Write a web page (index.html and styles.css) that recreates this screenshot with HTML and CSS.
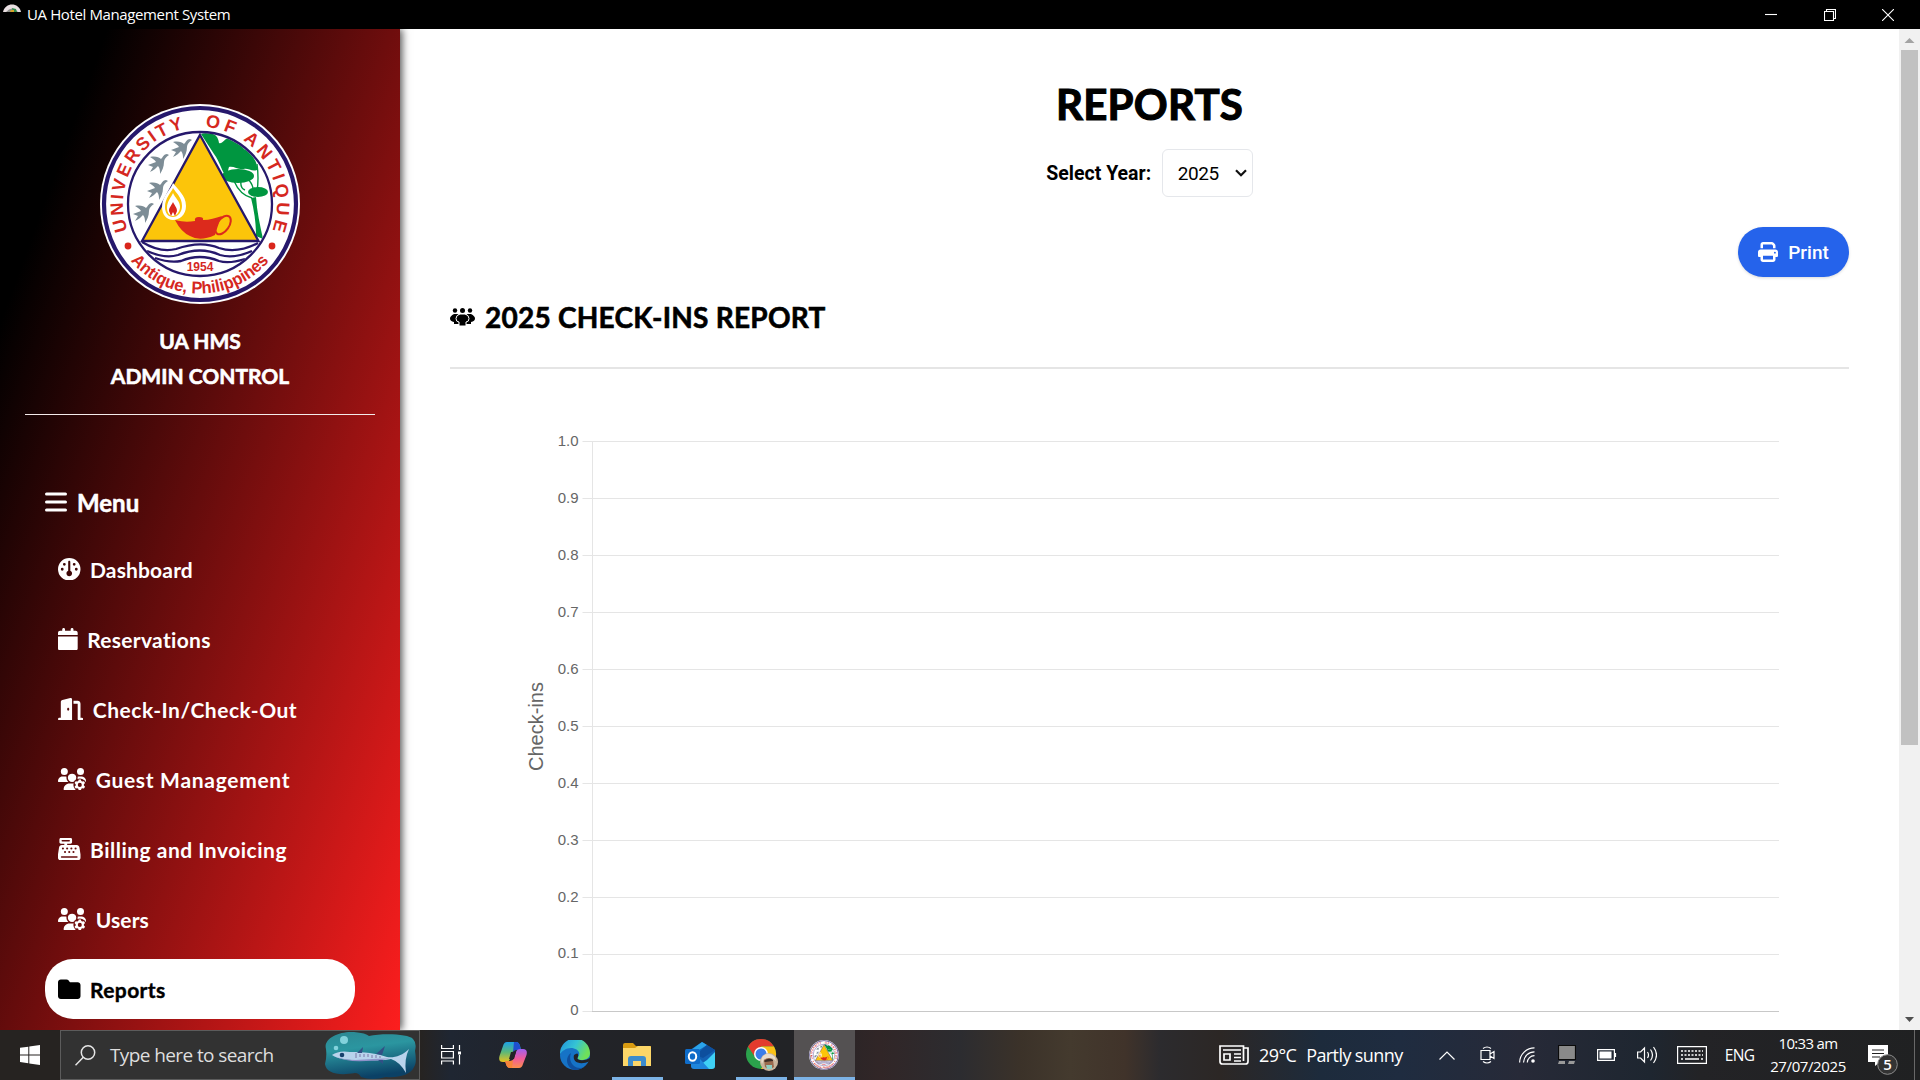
FILE: index.html
```html
<!DOCTYPE html>
<html lang="en">
<head>
<meta charset="utf-8">
<title>UA Hotel Management System</title>
<link rel="stylesheet" href="styles.css">
</head>
<body>
<svg class="defs" aria-hidden="true">
  <symbol id="i-users-gear" viewBox="0 0 640 512">
    <mask id="gear-gap"><rect width="640" height="512" fill="#fff"/><circle cx="496" cy="384" r="146" fill="#000"/></mask>
    <g mask="url(#gear-gap)"><path d="M144 160A80 80 0 1 0 144 0a80 80 0 1 0 0 160zm368 0A80 80 0 1 0 512 0a80 80 0 1 0 0 160zM0 298.7C0 310.4 9.6 320 21.3 320H235.300c-26.600-23.500-43.300-57.800-43.300-96c0-7.600.7-15 1.900-22.300c-13.600-6.300-28.700-9.700-44.600-9.700H106.700C47.800 192 0 239.800 0 298.700zM618.700 320c11.800 0 21.300-9.600 21.300-21.300C640 239.800 592.200 192 533.300 192h-42.700c-15.900 0-31 3.500-44.600 9.700c1.300 7.200 1.900 14.700 1.900 22.300c0 38.200-16.800 72.500-43.300 96zM320 320a96 96 0 1 0 0-192a96 96 0 1 0 0 192zM261.300 352C187.700 352 128 411.700 128 485.300c0 14.700 11.900 26.700 26.700 26.700H485.300L500 352z"/></g>
    <path fill-rule="evenodd" d="M470 260h52l8 36 24 14 36-11 26 45-27 25v30l27 25-26 45-36-11-24 14-8 40h-52l-8-40-24-14-36 11-26-45 27-25v-30l-27-25 26-45 36 11 24-14zM496 338a46 46 0 1 0 0 92a46 46 0 1 0 0-92z"/>
  </symbol>
  <symbol id="seal" viewBox="0 0 200 200">
    <defs>
      <path id="arc-top" d="M27.640 126.330A77 77 0 1 1 172.360 126.330"/>
      <path id="arc-bottom" d="M15.900 130.600A89.500 89.500 0 0 0 184.100 130.600"/>
      <clipPath id="seal-core"><circle cx="100" cy="100" r="71"/></clipPath>
    </defs>
    <circle cx="100" cy="100" r="100" fill="#fff"/>
    <circle cx="100" cy="100" r="96" fill="none" stroke="#26186c" stroke-width="4.200"/>
    <g clip-path="url(#seal-core)">
      <g fill="#009640">
        <path d="M101 30c10-3 17 0 18 9c3 1 4-2 7-4c8-2 14 4 18 10c8 5 14 13 13 21c-5 2-9-2-13-1c-6 1-10-3-15-2c-2 6 0 8-3 9c-4-4-6-14-12-22z"/>
        <ellipse cx="138" cy="72" rx="16" ry="7"/><ellipse cx="158" cy="88" rx="10" ry="5"/>
        <path d="M151 94l5-1c1 15 4 28 7 42l-7-3c0-14-2-26-5-38z"/>
      </g>
      <g fill="none" stroke="#009640" stroke-width="1.400"><path d="M157 60q2 14 0 28M134 77q6 14 18 17M141 77q-1 7 4 9M147 74q5 5 6 10"/></g>
      <g fill="#7d8d96">
        <path id="bird" d="M71 46l8-3c-1-2-4-4-6-5c5-1 9 0 11 2c2-2 3-5 6-5l2 1c-3 2-5 4-5 7c0 5-2 9-4 12c0-3 0-6-2-8c-3 3-4 4-8 6l3-5z"/>
        <use href="#bird" x="-23" y="15"/><use href="#bird" x="-24" y="41"/><use href="#bird" x="-38" y="64"/>
      </g>
      <path d="M30 138h140v62H30z" fill="#fff"/>
      <g fill="none" stroke="#26186c" stroke-width="2.300"><path d="M42 138q18 11 34 7c14-5 29-7 43-1q18 6 39-5M47 147q18 8 31 4c15-6 29-6 42 0q14 4 32-4M55 154q14 5 26 3c14-6 26-5 38 0q10 3 26-2"/></g>
    </g>
    <circle cx="100" cy="100" r="72" fill="none" stroke="#26186c" stroke-width="2.300"/>
    <path d="M100 31L158.500 137H42z" fill="#fcc50a" stroke="#26186c" stroke-width="2.300"/>
    <path d="M73 79c-2 7-11 12-11 24c0 8 5 13 11 13s13-5 13-14c0-11-9-17-13-23z" fill="#fff"/>
    <path d="M73 84c-2 5-8 10-8 19c0 6 3 10 8 10s9-5 9-11c0-9-6-13-9-18z" fill="#fcc50a"/>
    <path d="M73 89c-2 5-6 8-6 15c0 5 3 8 6 8s7-4 7-9c0-6-5-9-7-14z" fill="#fff"/>
    <path d="M73 98c-1 3-4 5-4 9l2 5 2-4 2 4 2-5c0-4-3-6-4-9z" fill="#d9261c"/>
    <path d="M75 116c8 2 13 2 20 1q-1-4 4-4q5 0 4 3c7 0 12-2 19-4c-3 6-5 12-7 19q-15 7-25 1q-9-4-15-16z" fill="#dc2a1c"/>
    <ellipse cx="123" cy="121" rx="6" ry="10.500" transform="rotate(35 123 121)" fill="none" stroke="#dc2a1c" stroke-width="2"/>
    <circle cx="28" cy="142" r="3.400" fill="#d9261c"/><circle cx="172" cy="142" r="3.400" fill="#d9261c"/>
    <g class="seal-text">
      <text textLength="131"><textPath href="#arc-top" startOffset="0">UNIVERSITY</textPath></text>
      <text textLength="29"><textPath href="#arc-top" startOffset="153">OF</textPath></text>
      <text textLength="102"><textPath href="#arc-top" startOffset="193">ANTIQUE</textPath></text>
      <text class="seal-place" textLength="158" lengthAdjust="spacingAndGlyphs"><textPath href="#arc-bottom" startOffset="30">Antique, Philippines</textPath></text>
      <text class="seal-year" x="100" y="167" text-anchor="middle">1954</text>
    </g>
  </symbol>
</svg>

<header class="titlebar">
  <svg class="app-icon" viewBox="0 0 18 8"><path d="M0 8C2-2 16-2 18 8z" fill="#e9dfe2"/><path d="M3 8q6-7 12 0z" fill="#8f8f8a"/><path d="M9 4l4 1 1 3h-4z" fill="#2e8b4a"/><path d="M8 6h3v2H7z" fill="#d7a32a"/></svg>
  <span class="window-title">UA Hotel Management System</span>
  <div class="window-buttons">
    <svg viewBox="0 0 12 12"><path d="M0 5.500h12"/></svg>
    <svg viewBox="0 0 12 12"><path d="M.5 2.500h9v9h-9zM2.500 2.500v-2h9v9h-2"/></svg>
    <svg viewBox="0 0 12 12"><path d="M0 0l12 12M12 0L0 12"/></svg>
  </div>
</header>

<div class="workspace">
  <aside class="sidebar">
    <svg class="logo"><use href="#seal"/></svg>
    <h2 class="brand">UA HMS<br>ADMIN CONTROL</h2>
    <hr class="brand-rule">
    <nav class="menu">
      <h3 class="menu-title"><svg viewBox="0 0 22 20" width="22" height="20"><path d="M1.500 2h19M1.500 10h19M1.500 18h19" stroke="#fff" stroke-width="3" stroke-linecap="round"/></svg>Menu</h3>
      <a class="item dashboard"><svg viewBox="0 0 512 512"><path d="M0 256a256 256 0 1 1 512 0A256 256 0 1 1 0 256zm320 96c0-26.900-16.500-49.900-40-59.300V88c0-13.300-10.700-24-24-24s-24 10.700-24 24V292.700c-23.500 9.500-40 32.500-40 59.300c0 35.300 28.700 64 64 64s64-28.700 64-64zM144 176a32 32 0 1 0 0-64 32 32 0 1 0 0 64zm-16 80a32 32 0 1 0 -64 0 32 32 0 1 0 64 0zm288 32a32 32 0 1 0 0-64 32 32 0 1 0 0 64zM400 144a32 32 0 1 0 -64 0 32 32 0 1 0 64 0z"/></svg>Dashboard</a>
      <a class="item reservations"><svg viewBox="0 0 448 512"><path d="M96 32V64H48C21.500 64 0 85.500 0 112v48H448V112c0-26.500-21.500-48-48-48H352V32c0-17.700-14.300-32-32-32s-32 14.300-32 32V64H160V32c0-17.700-14.300-32-32-32S96 14.300 96 32zM448 192H0V464c0 26.500 21.500 48 48 48H400c26.500 0 48-21.500 48-48V192z"/></svg>Reservations</a>
      <a class="item checkin"><svg viewBox="0 0 576 512"><path d="M320 32c0-9.900-4.500-19.200-12.300-25.200S289.800-1.400 280.200 1l-179.900 45C79 51.300 64 70.500 64 92.500V448H32c-17.700 0-32 14.300-32 32s14.300 32 32 32H320V32zM256 256c0 17.700-10.700 32-24 32s-24-14.300-24-32s10.700-32 24-32s24 14.300 24 32zm96-128h96V480c0 17.700 14.300 32 32 32h64c17.700 0 32-14.300 32-32s-14.300-32-32-32H512V128c0-35.300-28.700-64-64-64H352v64z"/></svg>Check-In/Check-Out</a>
      <a class="item guests"><svg viewBox="0 0 640 512"><use href="#i-users-gear"/></svg>Guest Management</a>
      <a class="item billing"><svg viewBox="0 0 512 512"><path d="M64 0C46.300 0 32 14.300 32 32V96c0 17.700 14.300 32 32 32h80v32H87c-31.600 0-58.500 23.100-63.300 54.400L1.100 364.100C.4 368.800 0 373.600 0 378.400V448c0 35.300 28.700 64 64 64H448c35.300 0 64-28.700 64-64V378.400c0-4.800-.4-9.600-1.100-14.400L488.200 214.400C483.500 183.100 456.600 160 425 160H208V128h80c17.700 0 32-14.300 32-32V32c0-17.700-14.300-32-32-32H64zM96 48H256c8.800 0 16 7.200 16 16s-7.200 16-16 16H96c-8.800 0-16-7.200-16-16s7.200-16 16-16zM64 432c0-8.800 7.200-16 16-16H432c8.800 0 16 7.200 16 16s-7.200 16-16 16H80c-8.800 0-16-7.200-16-16zm48-168a24 24 0 1 1 0-48 24 24 0 1 1 0 48zm120-24a24 24 0 1 1 -48 0 24 24 0 1 1 48 0zM160 344a24 24 0 1 1 0-48 24 24 0 1 1 0 48zM328 240a24 24 0 1 1 -48 0 24 24 0 1 1 48 0zM256 344a24 24 0 1 1 0-48 24 24 0 1 1 0 48zM424 240a24 24 0 1 1 -48 0 24 24 0 1 1 48 0zM352 344a24 24 0 1 1 0-48 24 24 0 1 1 0 48z"/></svg>Billing and Invoicing</a>
      <a class="item users"><svg viewBox="0 0 640 512"><use href="#i-users-gear"/></svg>Users</a>
      <a class="item reports active"><svg viewBox="0 0 512 512"><path d="M64 480H448c35.300 0 64-28.700 64-64V160c0-35.300-28.700-64-64-64H288c-10.100 0-19.600-4.700-25.600-12.800L243.200 57.600C231.100 41.500 212.100 32 192 32H64C28.700 32 0 60.700 0 96V416c0 35.300 28.700 64 64 64z"/></svg>Reports</a>
    </nav>
  </aside>

  <main class="content">
    <h1 class="page-title">REPORTS</h1>
    <div class="year-picker">
      <label class="year-label">Select Year:</label>
      <div class="year-select"><span>2025</span><svg viewBox="0 0 12 8" width="12" height="8"><path d="M1 1.200l5 5 5-5" fill="none" stroke="#111" stroke-width="2.200"/></svg></div>
    </div>
    <div class="actions">
      <button class="print"><svg viewBox="0 0 512 512" width="20" height="20"><path fill="#fff" d="M128 0C92.700 0 64 28.700 64 64v96h64V64H354.700L384 93.300V160h64V93.300c0-17-6.700-33.300-18.700-45.300L400 18.700C388 6.700 371.700 0 354.700 0H128zM384 352v32 64H128V384 368 352H384zm64 32h32c17.700 0 32-14.300 32-32V256c0-35.300-28.700-64-64-64H64c-35.300 0-64 28.700-64 64v96c0 17.700 14.300 32 32 32H64v64c0 35.300 28.700 64 64 64H384c35.300 0 64-28.700 64-64V384zM432 248a24 24 0 1 1 0 48 24 24 0 1 1 0-48z"/></svg>Print</button>
    </div>
    <h2 class="report-title">
      <svg viewBox="0 0 25 18" width="25" height="18"><circle cx="5" cy="2.500" r="2.200"/><circle cx="20" cy="2.500" r="2.200"/><path d="M4 6h4l1 10H4v-2Q0 13 0 10.500T4 6zM21 6h-4l-1 10h5v-2q4-1 4-3.500T21 6z"/><path d="M10 6h5q4 1 4 4.500T16 14v4H9v-4Q6 14 6 10.500T10 6z" stroke="#fff" stroke-width="1"/><circle cx="12.500" cy="2.500" r="2.500"/></svg>
      2025 CHECK-INS REPORT
    </h2>
    <svg class="chart" viewBox="0 0 1400 660">
      <g class="grid">
        <path d="M132.500 71.500h1196.500M132.500 128.500h1196.500M132.500 185.500h1196.500M132.500 242.500h1196.500M132.500 299.500h1196.500M132.500 356.500h1196.500M132.500 413.500h1196.500M132.500 470.500h1196.500M132.500 527.500h1196.500M132.500 584.500h1196.500M132.500 641.500h10M142.500 71v571"/>
        <path class="baseline" d="M142 641.500h1187"/>
      </g>
      <g class="ticks">
        <text x="128.500" y="76">1.0</text><text x="128.500" y="133">0.9</text><text x="128.500" y="190">0.8</text><text x="128.500" y="247">0.7</text><text x="128.500" y="304">0.6</text><text x="128.500" y="361">0.5</text><text x="128.500" y="418">0.4</text><text x="128.500" y="475">0.3</text><text x="128.500" y="532">0.2</text><text x="128.500" y="588">0.1</text><text x="128.500" y="645">0</text>
      </g>
      <text class="axis-title" transform="translate(93 356.500) rotate(-90)">Check-ins</text>
    </svg>
  </main>

  <div class="scrollbar">
    <svg viewBox="0 0 21 21"><path d="M5.500 14l5-5 5 5z" fill="#a3a3a3"/></svg>
    <div class="thumb"></div>
    <svg viewBox="0 0 21 21"><path d="M6 8l4.500 5L15 8z" fill="#505050"/></svg>
  </div>
</div>

<footer class="taskbar">
  <div class="start"><svg viewBox="0 0 20 20" width="20" height="20"><path fill="#fff" d="M0 2.800l8.300-1.100v7.700H0zM9.300 1.500L20 0v9.400H9.300zM0 10.400h8.300v7.800L0 17zM9.300 10.400H20V20L9.300 18.500z"/></svg></div>
  <div class="search">
    <svg class="lens" viewBox="0 0 21 21" width="21" height="21" fill="none" stroke="#e6e6e6" stroke-width="1.500"><circle cx="13" cy="7.500" r="6.700"/><path d="M8.300 12.300L.5 20.300"/></svg>
    <span class="search-text">Type here to search</span>
    <svg class="fish" viewBox="0 0 92 48" width="92" height="48">
      <defs><linearGradient id="sea" x1="0" y1="0" x2=".25" y2="1"><stop offset="0" stop-color="#2c8792"/><stop offset=".4" stop-color="#2b96a0"/><stop offset="1" stop-color="#0b4166"/></linearGradient></defs>
      <path d="M2 18C-1 8 14 0 30 1q12 1 15 4c14-3 40-2 44 3q4 4 2 12q2 12-1 16c-3 8-16 11-28 10q-14 4-25 0q-2-4-6-4C14 45 2 42 1 33q2-7 1-15z" fill="url(#sea)"/>
      <path d="M8 24q7-5 18-3c14 0 26 1 37 5 7 1 15-1 22-8q-5 10-3 24-6-11-15-14-8 2-20 1c-14 0-31 1-39-5z" fill="#b9d3ec"/>
      <path d="M12 26q12 4 28 2.500 14-1 26-1-10 2.500-24 2.500-20 1-30-4z" fill="#8e92c9"/>
      <path d="M33 22l6-6-1 6zM52 23l9-8-3 9zM54 29l5 4v-4z" fill="#334f86"/>
      <path d="M32 22v5M36 23v3M40 23v3M44 23v3M48 24v3M52 24v3M56 25v2" stroke="#7c78a5"/>
      <circle cx="18" cy="24" r="2.300" fill="#17406c"/><circle cx="20" cy="9" r="4" fill="#83d2dc"/><circle cx="12" cy="17" r="2.300" fill="#83d2dc"/>
    </svg>
  </div>
  <div class="apps">
    <div class="app"><svg viewBox="0 0 20 20" width="20" height="20" fill="none" stroke="#fff" stroke-width="1.200"><path d="M.6 0v3.500h11.800V0M.6 19.500V16h11.800v3.500M.6 6.500h11.800v6.500H.6zM18.500 0v5M18.500 10v9.500"/><path d="M17 6.500h3v3h-3z" fill="#fff" stroke="none"/></svg></div>
    <div class="app"><svg viewBox="0 0 28 26" width="28" height="26">
      <defs><linearGradient id="cp1" x1="0" y1="0" x2="0" y2="1"><stop offset="0" stop-color="#1ba1e6"/><stop offset=".5" stop-color="#5bb87a"/><stop offset="1" stop-color="#e9c21d"/></linearGradient><linearGradient id="cp2" x1="0" y1="0" x2="0" y2="1"><stop offset="0" stop-color="#a05ff0"/><stop offset=".5" stop-color="#ef5b9c"/><stop offset="1" stop-color="#fb8f4b"/></linearGradient></defs>
      <path d="M8 0h9q3 0 4 4l1 4h-5q-3 0-4 3l-2 6q-1 3-4 3H4q-5 0-3.500-6L4 4Q5 0 8 0z" fill="url(#cp1)"/><path d="M15 0h2q3 0 4 4l1 4h-5q-2 0-3 2z" fill="#1f4fd0"/>
      <path d="M20 26h-9q-3 0-4-4l-1-3h5q3 0 4-3l2-6q1-3 4-3h3q5 0 3.500 6L24 22q-1 4-4 4z" fill="url(#cp2)"/><path d="M6 19h5q2 0 3-1l-1 8h-2q-3 0-4-4z" fill="#f5853a"/><path d="M12 10h5l-2 7h-5z" fill="#222327"/></svg></div>
    <div class="app"><svg viewBox="0 0 30 30" width="30" height="30">
      <defs><linearGradient id="ed1" x1="0" y1="0" x2="1" y2=".4"><stop offset="0" stop-color="#1f8fdc"/><stop offset=".55" stop-color="#35c4d4"/><stop offset="1" stop-color="#6fe05a"/></linearGradient></defs>
      <circle cx="15" cy="15" r="15" fill="#1673c6"/><path d="M0 14A15 15 0 0 1 30 13c0 6-5 7-9 7-3 0-4-1-3-3 4-5-2-9-7-9S2 11 0 14z" fill="url(#ed1)"/><path d="M11 13c-3 8 2 15 9 15q4 0 6-3A15 15 0 0 1 14 30C7 28 4 18 11 13z" fill="#0f4f9d"/><path d="M14 15c-2 7 6 11 16 6v-3q-5 3-10 2-4-1-2-3 1-6-4-2z" fill="#222327"/></svg></div>
    <div class="app open"><svg viewBox="0 0 28 24" width="28" height="24"><path d="M0 2q0-2 2-2h8l3 3h15v20H0z" fill="#d99b11"/><path d="M0 5h12l3-2h12l1 1v19H0z" fill="#fcd668"/><path d="M5 23v-7q0-3 3-3h12q3 0 3 3v7h-5v-5h-8v5z" fill="#3d8ccc"/></svg></div>
    <div class="app"><svg viewBox="0 0 30 27" width="30" height="27"><path d="M5 8l12-8 13 8v16q0 2-2 2H9q-3 0-3-3z" fill="#1360b3"/><path d="M6 8l11-8 5 3-14 9z" fill="#2ba4ea"/><path d="M22 3l8 5-12 8-7-3z" fill="#0d4f9e"/><path d="M30 10v14q0 3-3 3H9l13-9z" fill="#3fd0f5"/><path d="M9 27q-3 0-3-3v-3l9-4 9 10z" fill="#1f86dc"/><rect y="7" width="15" height="15" rx="1.500" fill="#0f6cc9"/><ellipse cx="7.500" cy="14.500" rx="3.700" ry="4.200" fill="none" stroke="#fff" stroke-width="2"/></svg></div>
    <div class="app open"><svg viewBox="0 0 32 32" width="32" height="32"><circle cx="15" cy="15" r="15" fill="#2ba24c"/><path d="M2 7.500A15 15 0 0 1 28 7.500H15L9 18z" fill="#e33b2e"/><path d="M28 7.500A15 15 0 0 1 15 30l7-12-7-10.500z" fill="#fbc116"/><circle cx="15" cy="15" r="7" fill="#fff"/><circle cx="15" cy="15" r="5.500" fill="#3b7de9"/><circle cx="23" cy="23" r="9" fill="#c8b49c"/><path d="M17 17q6-5 12 1l1 4-4-3-8 1-2 5q-2-4 1-8z" fill="#e8dccb"/><path d="M18 21q5-4 9 0l1 7q-5 4-9 0z" fill="#9a6a4e"/><path d="M20 26h6v4h-5z" fill="#8ecfc4"/><path d="M18 22q5-4 9-1v1l-8 1z" fill="#3b2c26"/></svg></div>
    <div class="app open current"><svg width="30" height="30"><use href="#seal"/></svg></div>
  </div>
  <div class="tray">
    <div class="weather"><svg viewBox="0 0 30 20" width="30" height="20" fill="none" stroke="#fff" stroke-width="1.700"><path d="M24.500 3V1H1v15.500Q1 19 3.500 19h23q2.500 0 2.500-2.500V3h-4.500v13"/><path d="M4 5h18M15 9h7M15 12.500h7M15 16h7M5 9h6v6H5z"/></svg><span>29°C</span><span>Partly sunny</span></div>
    <div class="slot"><svg viewBox="0 0 16 9" width="16" height="9"><path d="M.5 8.500L8 1l7.500 7.500"/></svg></div>
    <div class="slot"><svg viewBox="0 0 15 18" width="15" height="18"><path d="M3 2.500Q7 -.5 11 2.500M3 15.500q4 3 8 0M1 4.500h9v9H1zM10 8l4-2.500v7L10 10"/></svg></div>
    <div class="slot"><svg viewBox="0 0 16 16" width="16" height="16"><path d="M.6 15.500A15 15 0 0 1 15.500.8M4.500 15.500A11 11 0 0 1 15.500 4.800M8.300 15.500A7 7 0 0 1 15.500 8.700"/><circle cx="14" cy="14" r="1.800" fill="#fff" stroke="none"/></svg></div>
    <div class="slot"><svg viewBox="0 0 18 20" width="18" height="20"><path d="M.5.5h17v14H.5z" fill="#8a8a8a" stroke="#0b0b0b"/><path d="M1 16h6v3H0zM11 16h6l-1 3h-6z" fill="#9a9a9a" stroke="none"/></svg></div>
    <div class="slot"><svg viewBox="0 0 20 12" width="20" height="12"><path d="M.6.6h16.800v10.800H.6zM18.500 4v4"/><path d="M2.500 2.500h12v7h-12z" fill="#fff" stroke="none"/></svg></div>
    <div class="slot"><svg viewBox="0 0 20 18" width="20" height="18"><path d="M.6 6h3L7.500 2v14l-3.900-4h-3zM10.500 6q2 3 0 6M13.500 3.500q4 5.500 0 11M16.500 1q6 8 0 16"/></svg></div>
    <div class="slot keyboard"><svg viewBox="0 0 30 18" width="30" height="18"><path d="M.6.6h28.800v16.800H.6z"/><path d="M4 5h22M4 9h22" stroke-dasharray="2 1.500" stroke-width="1.400"/><path d="M4 13h2M8 13h14M24 13h2" stroke-width="1.400"/></svg></div>
    <div class="slot lang">ENG</div>
    <div class="clock"><span class="time">10:33 am</span><span>27/07/2025</span></div>
    <div class="notify"><svg viewBox="0 0 30 30" width="30" height="30"><path d="M0 0h20v17h-8l-5 4v-4H0z" fill="#fff" stroke="none"/><path d="M4 5h12M4 8.500h12M4 12h8" stroke="#222" stroke-width="1.200"/><circle cx="19.500" cy="19.500" r="9.800" fill="#333" stroke="#8c8c8c"/><text x="19.500" y="25" class="badge">5</text></svg></div>
  </div>
</footer>
</body>
</html>
```
FILE: styles.css
```css
* { box-sizing: border-box; }

body {
  margin: 0;
  width: 1920px;
  height: 1080px;
  overflow: hidden;
  display: flex;
  flex-direction: column;
  background: #fff;
  font-family: Lato, sans-serif;
}

.defs { position: absolute; width: 0; height: 0; }

/* Window title bar */
.titlebar {
  height: 29px;
  flex: none;
  display: flex;
  align-items: center;
  background: #000;
  color: #fff;
}
.app-icon { width: 18px; height: 8px; margin: 0 6px 14px 3px; }
.window-title { font: 15px/20px "Open Sans", sans-serif; letter-spacing: -0.38px; padding-bottom: 2px; }
.window-buttons { margin-left: auto; display: flex; gap: 46.5px; padding-right: 26px; }
.window-buttons svg { width: 12px; height: 12px; fill: none; stroke: #fff; stroke-width: 1.1; }

.workspace { flex: 1; min-height: 0; display: flex; }

/* Sidebar */
.sidebar {
  width: 400px;
  flex: none;
  overflow: hidden;
  padding: 75px 25px 0;
  color: #fff;
  background: linear-gradient(110deg, #000 14%, #fd1e1e 100%);
  box-shadow: 2px 0 8px rgba(0, 0, 0, 0.7);
  z-index: 1;
}
.logo { display: block; width: 200px; height: 200px; margin: 0 auto; }
.seal-text { font: bold 18px "Liberation Sans", sans-serif; fill: #d5281f; }
.seal-place { font-size: 17px; }
.seal-year { font-size: 12px; }
.brand { margin: 19px 0 0; text-align: center; font-size: 21px; line-height: 35px; font-weight: 700; -webkit-text-stroke: 0.6px; }
.brand-rule { margin: 21px 0 0; border: 0; height: 1px; background: #f3eaea; }
.menu { padding: 62px 20px 0; display: flex; flex-direction: column; gap: 10px; }
.menu-title { margin: 0 0 2px; height: 50px; display: flex; align-items: center; gap: 10px; font-size: 24px; font-weight: 700; -webkit-text-stroke: 0.5px; }
.item {
  height: 60px;
  padding: 0 13px;
  display: flex;
  flex: none;
  align-items: center;
  gap: 9.5px;
  border-radius: 28px;
  font-size: 21px;
  font-weight: 700;
  letter-spacing: 0.15px;
}
.item svg { height: 22.5px; width: auto; fill: currentColor; }
.reservations { letter-spacing: 0.3px; }
.checkin, .billing { letter-spacing: 0.5px; }
.guests { letter-spacing: 0.7px; }
.active { background: #fff; color: #000; width: 310px; letter-spacing: 0.4px; -webkit-text-stroke: 0.4px; }

/* Report page */
.content {
  flex: 1;
  min-width: 0;
  padding: 50px 50px 0;
  overflow: hidden;
  display: flex;
  flex-direction: column;
  color: #000;
}
.page-title { margin: 0; text-align: center; font-size: 42px; line-height: 50px; letter-spacing: 0.25px; -webkit-text-stroke: 1.1px; }
.year-picker { margin-top: 20px; display: flex; justify-content: center; gap: 10.5px; align-items: center; }
.year-label { font: 700 19.5px/24px Roboto, sans-serif; padding-top: 2px; }
.year-select {
  width: 91px;
  height: 48px;
  padding: 0 5px 0 15px;
  display: flex;
  align-items: center;
  justify-content: space-between;
  border: 1px solid #e5e7eb;
  border-radius: 6px;
  font: 19px Roboto, sans-serif;
  letter-spacing: -0.4px;
}
.actions { margin-top: 30px; display: flex; justify-content: flex-end; }
.print {
  width: 111px;
  height: 50px;
  border: 0;
  border-radius: 25px;
  display: flex;
  align-items: center;
  justify-content: center;
  gap: 10px;
  background: #2563eb;
  color: #fff;
  font: 500 19px Roboto, sans-serif;
  box-shadow: 0 1px 3px rgba(0, 0, 0, 0.15);
}
.report-title {
  margin: 20px 0 0;
  height: 72px;
  padding-bottom: 31px;
  display: flex;
  align-items: center;
  gap: 10px;
  border-bottom: 2px solid #e5e5e5;
  font-size: 28px;
  letter-spacing: 0.25px;
  -webkit-text-stroke: 0.6px;
}

/* Chart */
.chart { width: 1400px; height: 660px; flex: none; margin-top: 1px; }
.grid path { fill: none; stroke: #e5e5e5; }
.grid .baseline { stroke: #c8c8c8; }
.ticks { font: 15px "Liberation Sans", sans-serif; fill: #666; text-anchor: end; }
.axis-title { font: 20px "Liberation Sans", sans-serif; fill: #666; text-anchor: middle; }

.scrollbar { width: 21px; flex: none; display: flex; flex-direction: column; background: #f1f1f1; }
.scrollbar svg { width: 21px; height: 21px; flex: none; }
.thumb { width: 17px; height: 695px; margin: 0 2px auto; background: #c1c1c1; }

/* Taskbar */
.taskbar {
  height: 50px;
  flex: none;
  z-index: 2;
  display: flex;
  color: #fff;
  font-family: "Open Sans", sans-serif;
  background: linear-gradient(90deg, #262321 0, #262321 420px, #1f2632 450px, #222328 560px, #222326 790px, #312627 880px, #2c2c30 960px, #3b3229 1020px, #443a2e 1070px, #40332a 1125px, #2c2b2e 1160px, #2c2725 1220px, #1d2b3c 1320px, #1f2c40 1400px, #272a38 1520px, #1e2630 1650px, #232326 1700px, #202122 1920px);
}
.start { width: 60px; display: flex; align-items: center; justify-content: center; }
.search {
  width: 360px;
  display: flex;
  align-items: center;
  border: 1px solid #5c5c5c;
  background: #323232;
  padding: 0 3px 0 14px;
}
.search-text { margin-left: 14px; font-size: 19px; letter-spacing: -0.6px; color: #dedede; }
.fish { margin-left: auto; }
.apps { display: flex; gap: 1.3px; }
.app { width: 61px; display: flex; align-items: center; justify-content: center; }
.open { background: linear-gradient(#7cb3e6, #7cb3e6) bottom / 51px 3px no-repeat; }
.current { background-size: 61px 3px; background-color: #545152; }
.tray { margin-left: auto; display: flex; align-items: center; padding-right: 5px; }
.weather { width: 208px; display: flex; align-items: center; gap: 10px; font-size: 18px; letter-spacing: -0.6px; }
.slot { width: 40px; display: flex; align-items: center; justify-content: center; }
.slot svg { fill: none; stroke: #fff; stroke-width: 1.2; }
.keyboard { width: 50px; }
.lang { width: 45px; font-size: 15.5px; letter-spacing: -0.7px; }
.clock { width: 92px; display: flex; flex-direction: column; align-items: center; font-size: 15px; line-height: 23px; letter-spacing: -0.4px; }
.time { letter-spacing: -0.7px; }
.notify { width: 61px; height: 50px; padding: 15px 0 0 14px; border-right: 1px solid #686868; }
.badge { font-size: 15px; font-weight: 600; fill: #fff; text-anchor: middle; }
```
